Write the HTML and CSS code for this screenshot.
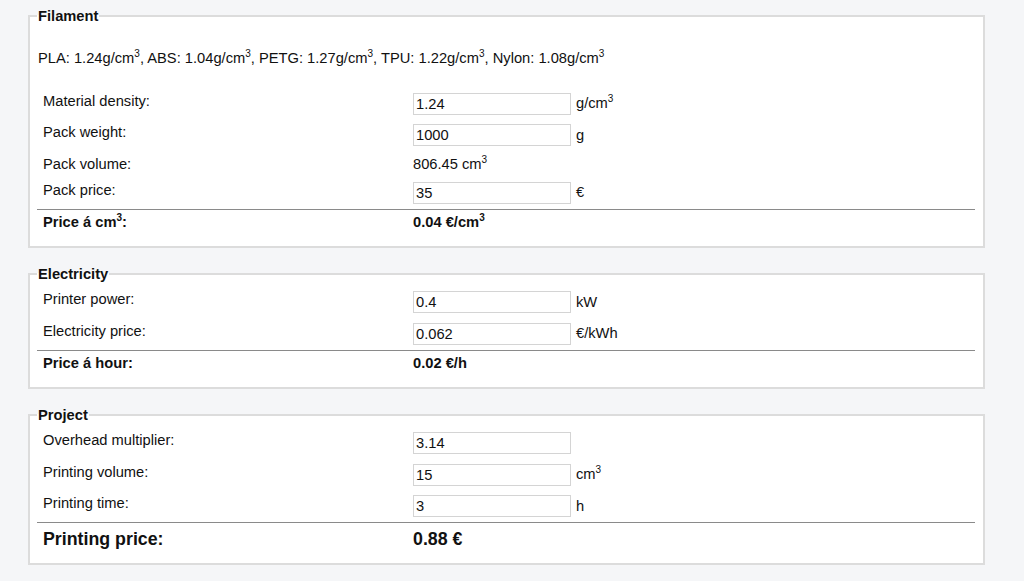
FILE: index.html
```html
<!DOCTYPE html>
<html lang="en">
<head>
<meta charset="utf-8">
<title>3D printing price calculator</title>
<link rel="stylesheet" href="styles.css">
</head>
<body>
<main class="page">
  <fieldset class="box">
    <legend class="box-title">Filament</legend>
    <p class="hint">PLA: 1.24g/cm<sup>3</sup>, ABS: 1.04g/cm<sup>3</sup>, PETG: 1.27g/cm<sup>3</sup>, TPU: 1.22g/cm<sup>3</sup>, Nylon: 1.08g/cm<sup>3</sup></p>
    <table class="calc">
      <colgroup><col class="c-label"><col class="c-value"><col class="c-unit"></colgroup>
      <tr class="in"><td class="lbl">Material density:</td><td class="val"><input class="field" type="text" value="1.24"></td><td class="unit">g/cm<sup>3</sup></td></tr>
      <tr class="in"><td class="lbl">Pack weight:</td><td class="val"><input class="field" type="text" value="1000"></td><td class="unit">g</td></tr>
      <tr class="out"><td class="lbl">Pack volume:</td><td class="val">806.45 cm<sup>3</sup></td><td class="unit"></td></tr>
      <tr class="in"><td class="lbl">Pack price:</td><td class="val"><input class="field" type="text" value="35"></td><td class="unit">€</td></tr>
      <tr class="total"><td class="lbl">Price á cm<sup>3</sup>:</td><td class="val">0.04 €/cm<sup>3</sup></td><td class="unit"></td></tr>
    </table>
  </fieldset>

  <fieldset class="box">
    <legend class="box-title">Electricity</legend>
    <table class="calc">
      <colgroup><col class="c-label"><col class="c-value"><col class="c-unit"></colgroup>
      <tr class="in"><td class="lbl">Printer power:</td><td class="val"><input class="field" type="text" value="0.4"></td><td class="unit">kW</td></tr>
      <tr class="in"><td class="lbl">Electricity price:</td><td class="val"><input class="field" type="text" value="0.062"></td><td class="unit">€/kWh</td></tr>
      <tr class="total"><td class="lbl">Price á hour:</td><td class="val">0.02 €/h</td><td class="unit"></td></tr>
    </table>
  </fieldset>

  <fieldset class="box">
    <legend class="box-title">Project</legend>
    <table class="calc">
      <colgroup><col class="c-label"><col class="c-value"><col class="c-unit"></colgroup>
      <tr class="in"><td class="lbl">Overhead multiplier:</td><td class="val"><input class="field" type="text" value="3.14"></td><td class="unit"></td></tr>
      <tr class="in"><td class="lbl">Printing volume:</td><td class="val"><input class="field" type="text" value="15"></td><td class="unit">cm<sup>3</sup></td></tr>
      <tr class="in"><td class="lbl">Printing time:</td><td class="val"><input class="field" type="text" value="3"></td><td class="unit">h</td></tr>
      <tr class="total grand"><td class="lbl">Printing price:</td><td class="val">0.88 €</td><td class="unit"></td></tr>
    </table>
  </fieldset>
</main>
</body>
</html>
```

FILE: styles.css
```css
html, body {
  margin: 0;
  padding: 0;
}

body {
  background: #f5f6f8;
  color: #111;
  font-family: "Liberation Sans", Arial, sans-serif;
  font-size: 14.7px;
  line-height: 17px;
}

.page {
  display: flex;
  flex-direction: column;
  gap: 17px;
  width: 957px;
  padding: 6.5px 0 0 28px;
}

.box {
  margin: 0;
  padding: 3.5px 8px 10.5px 7px;
  border: 2px solid #dcdcdc;
  background: #fff;
  min-width: 0;
}

.box-title {
  padding: 0 1px;
  margin-left: 0;
  font-size: 14.7px;
  line-height: 18px;
  font-weight: bold;
  color: #111;
}

.hint {
  margin: 22px 0 21px 1px;
  line-height: 17px;
}

sup {
  font-size: 10px;
  line-height: 0;
  vertical-align: 6px;
}

.calc {
  width: 100%;
  border-collapse: collapse;
  table-layout: fixed;
}

.c-label { width: 376px; }
.c-value { width: 163px; }

.calc td {
  padding: 4.5px 0 4.5px 0;
  vertical-align: middle;
}

.calc td.lbl {
  padding-left: 6px;
}

.in td {
  padding-bottom: 5px;
}

.in td.lbl {
  padding-top: 1px;
  padding-bottom: 6px;
}

.field {
  box-sizing: border-box;
  width: 158px;
  height: 22px;
  margin: 0;
  padding: 0 2px;
  border: 1px solid #d4d4d4;
  font-family: "Liberation Sans", Arial, sans-serif;
  font-size: 14.7px;
  color: #111;
  background: #fff;
  display: block;
}

.total td {
  border-top: 1px solid #8a8a8a;
  font-weight: bold;
  padding-top: 4px;
  padding-bottom: 5px;
}

.grand td {
  font-size: 17.8px;
  line-height: 20px;
}

.grand td,
.grand td.lbl {
  padding-top: 5.5px;
  padding-bottom: 4px;
}
```
